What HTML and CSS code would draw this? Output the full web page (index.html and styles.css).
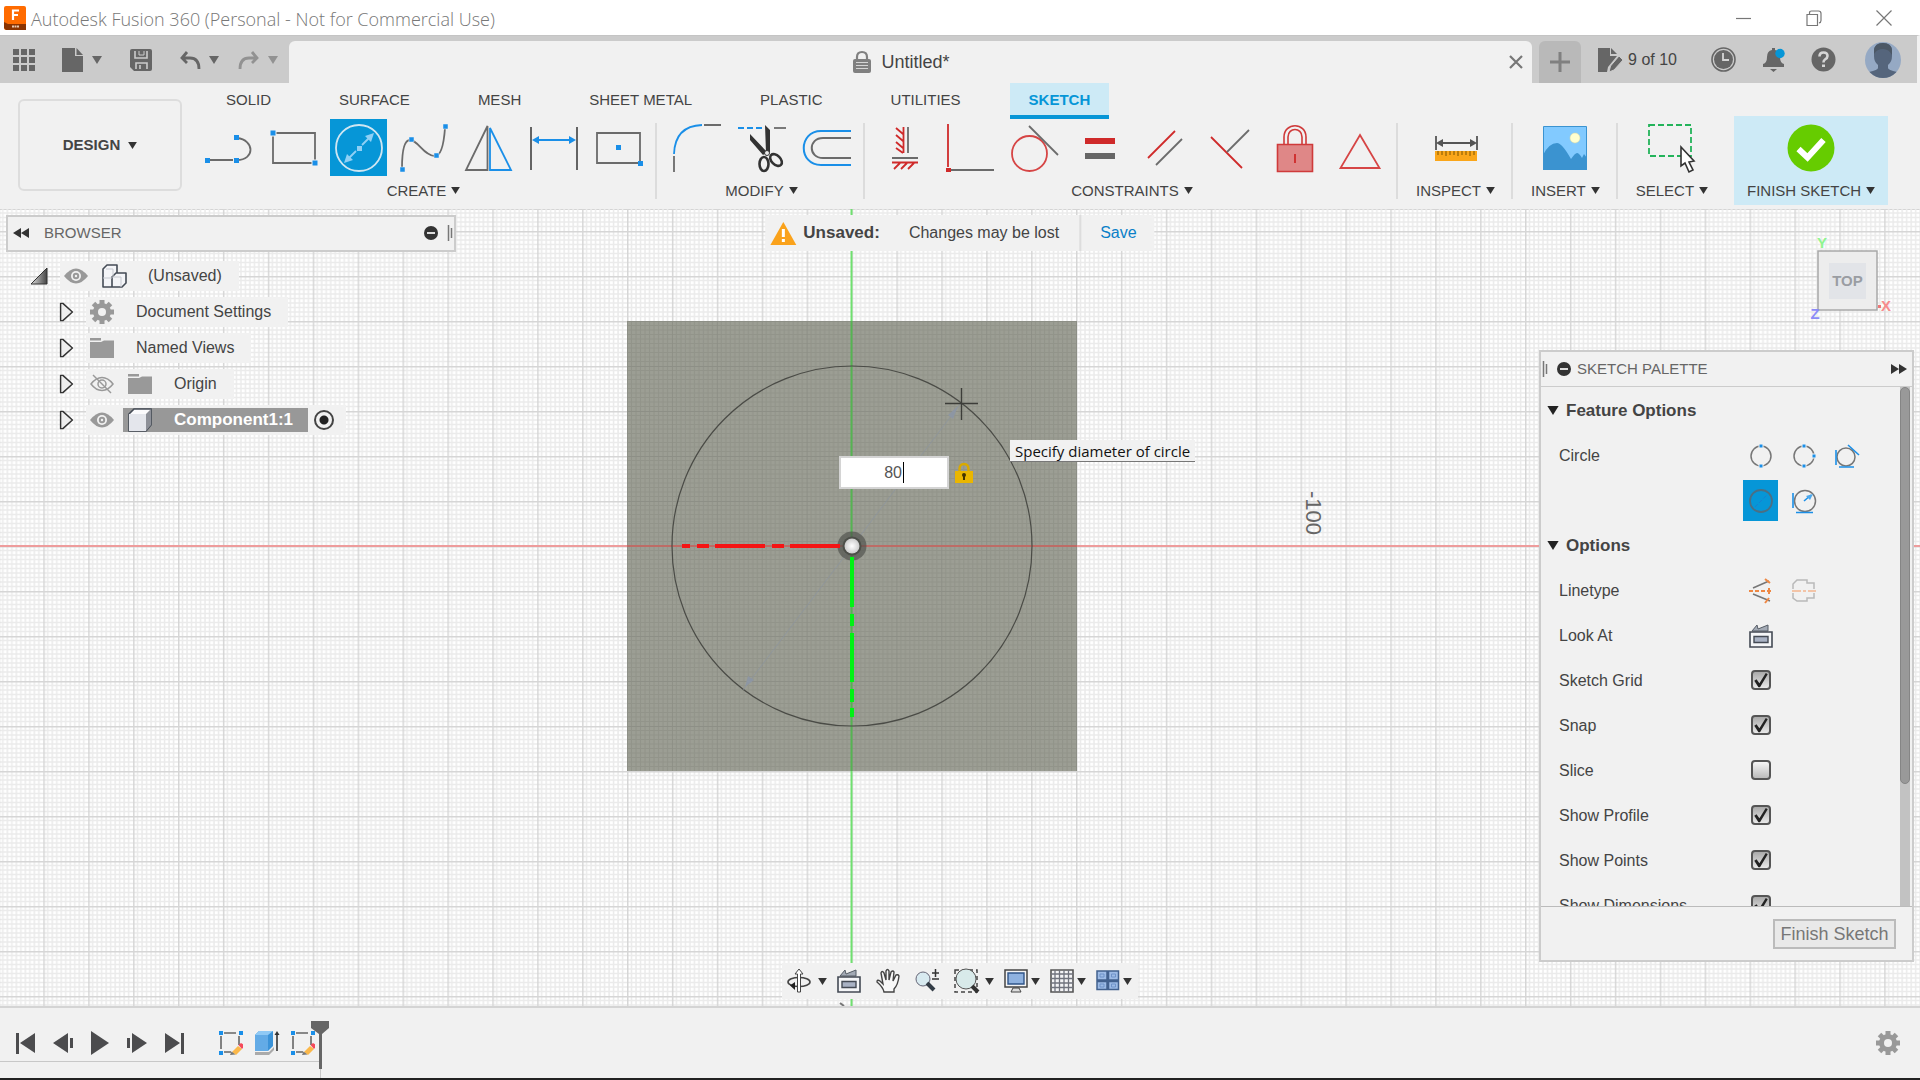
FILE: index.html
```html
<!DOCTYPE html>
<html lang="en">
<head>
<meta charset="utf-8">
<title>Autodesk Fusion 360 (Personal - Not for Commercial Use)</title>
<link rel="stylesheet" href="styles.css">
</head>
<body>
<svg class="symbols" aria-hidden="true">
  <symbol id="caret" viewBox="0 0 10 8"><path d="M0 0h10L5 8z" fill="currentColor"/></symbol>
  <symbol id="expand" viewBox="0 0 16 22"><path d="M1.500 1.500h2.500l10.500 9.500-10.500 9.500h-2.500z" fill="#eee" stroke="#333" stroke-width="1.600" stroke-linejoin="round"/></symbol>
  <symbol id="eye" viewBox="0 0 24 24"><path d="M0 12Q6 4.500 12 4.500T24 12Q18 19.500 12 19.500T0 12z" fill="#999"/><circle cx="12" cy="12" r="5" fill="#f1f1f1"/><circle cx="12" cy="12" r="3.200" fill="#999"/><circle cx="12" cy="12" r="1.200" fill="#f1f1f1"/></symbol>
  <symbol id="folder" viewBox="0 0 24 24"><path d="M0 6h11l3-1.500h10V22H0zM0 2h11v2.500H0z" fill="#999"/></symbol>
  <symbol id="gear" viewBox="0 0 24 24"><g fill="#999"><path d="M9.500 0h5v24h-5z"/><path d="M9.500 0h5v24h-5z" transform="rotate(45 12 12)"/><path d="M9.500 0h5v24h-5z" transform="rotate(90 12 12)"/><path d="M9.500 0h5v24h-5z" transform="rotate(135 12 12)"/><circle cx="12" cy="12" r="9"/></g><circle cx="12" cy="12" r="4" fill="#f1f1f1"/></symbol>
  <symbol id="collapse" viewBox="0 0 14 14"><circle cx="7" cy="7" r="7" fill="#333"/><path d="M3 7h8" stroke="#ddd" stroke-width="2"/></symbol>
  <symbol id="grip" viewBox="0 0 6 16"><path d="M1.500 0v16M4.500 3v10" stroke="#777" stroke-width="1.500"/></symbol>
  <symbol id="lookat" viewBox="0 0 24 24"><path d="M3 7l5-6 1 4 10-4v6z" fill="#a3aab5" stroke="#555c66"/><path d="M1 8h22v15H1z" fill="#f5f6f8" stroke="#444a54" stroke-width="1.600"/><path d="M5 12.500h14v6H5z" fill="#a9b2c4" stroke="#444a54" stroke-width="1.400"/></symbol>
  <symbol id="sketch" viewBox="0 0 24 24"><path d="M5 2h12M2 5v13M5 21h7M20 5v9" stroke="#666" stroke-width="1.600" fill="none"/><path d="M0 0h4v4H0zM20 0h4v4h-4zM0 20h4v4H0z" fill="#1a8fe8"/><path d="M13 21l6-6 4 3-6 6z" fill="#fbb84a"/><path d="M19.500 14l2.500-2 4 2.500-3 3.500z" fill="#f5495a"/><path d="M11 24l1.500-3.500 4 3z" fill="#777"/></symbol>
</svg>

<header class="titlebar">
  <svg class="logo" viewBox="0 0 22 24"><rect width="22" height="24" rx="2" fill="#ff6b00"/><path d="M0 16l4 2h18v6H2l-2-2z" fill="#8a3300"/><path d="M9 14V4.500h6M9 9h5" stroke="#fff" stroke-width="2.200" fill="none"/><path d="M8 20.500h7" stroke="#e8c8b0" stroke-width="2" stroke-dasharray="2 .5"/></svg>
  <h1>Autodesk Fusion 360 (Personal - Not for Commercial Use)</h1>
  <div class="window-controls">
    <button aria-label="Minimize"><svg viewBox="0 0 16 16"><path d="M0 8.500h15"/></svg></button>
    <button aria-label="Restore"><svg viewBox="0 0 16 16"><path d="M1 4.500h10.500V15.500H1zM3.500 4V3q0-2 2-2h7q2.500 0 2.500 2.500v7q0 2-2 2.500"/></svg></button>
    <button aria-label="Close"><svg viewBox="0 0 16 16"><path d="M.5.500l15 15M15.500.500l-15 15"/></svg></button>
  </div>
</header>

<div class="appbar">
  <div class="quick">
    <button aria-label="Data panel"><svg width="22" height="22" viewBox="0 0 22 22"><path d="M0 0h6v6H0zM8 0h6v6H8zM16 0h6v6h-6zM0 8h6v6H0zM8 8h6v6H8zM16 8h6v6h-6zM0 16h6v6H0zM8 16h6v6H8zM16 16h6v6h-6z" fill="#666"/></svg></button>
    <button class="q-file" aria-label="File"><svg width="21" height="24" viewBox="0 0 21 24"><path d="M0 0h13v8h8v16H0z" fill="#666"/><path d="M14.500 0L21 7h-6.500z" fill="#666"/></svg><svg class="caret"><use href="#caret"/></svg></button>
    <button class="q-save" aria-label="Save"><svg width="22" height="22" viewBox="0 0 22 22"><path d="M0 2q0-2 2-2h18q2 0 2 2v18q0 2-2 2H4l-4-4z" fill="#666"/><path d="M5 2v7h12V2M6 20v-6h11v6M10 16v4" fill="none" stroke="#cbcbcb" stroke-width="1.600"/><path d="M9 2v4h5V2" fill="#666" stroke="#cbcbcb"/></svg></button>
    <button class="q-undo" aria-label="Undo"><svg width="20" height="20" viewBox="0 0 20 20"><path d="M7 2L2 8l5 5M3 8h7q9 0 9 11" fill="none" stroke="#666" stroke-width="2.800"/></svg><svg class="caret"><use href="#caret"/></svg></button>
    <button class="q-redo" aria-label="Redo"><svg width="20" height="20" viewBox="0 0 20 20"><path d="M13 2l5 6-5 5M17 8h-7q-9 0-9 11" fill="none" stroke="#929292" stroke-width="2.800"/></svg><svg class="caret"><use href="#caret"/></svg></button>
  </div>
  <div class="doctab">
    <svg width="18" height="22" viewBox="0 0 18 22"><path d="M4 9V6q0-5 5-5t5 5v3" fill="none" stroke="#808080" stroke-width="2.200"/><rect y="8" width="18" height="14" rx="2" fill="#808080"/><path d="M3 11.500h12M3 14.500h12M3 17.500h12" stroke="#d5d5d5"/></svg>
    <span>Untitled*</span>
    <button class="tab-close" aria-label="Close document"><svg width="14" height="14" viewBox="0 0 14 14"><path d="M1 1l12 12M13 1L1 13" stroke="#777" stroke-width="2.200"/></svg></button>
  </div>
  <button class="newtab" aria-label="New design"><svg width="20" height="20" viewBox="0 0 20 20"><path d="M10 0v20M0 10h20" stroke="#808080" stroke-width="3"/></svg></button>
  <div class="account">
    <button class="docs"><svg width="25" height="24" viewBox="0 0 25 24"><path d="M0 0h12v8h7l-9 11-1 5H0z" fill="#666"/><path d="M13 0l6 6h-6z" fill="#666"/><path d="M11 24l1.500-6L21 8l4 4-9 10z" fill="#666" stroke="#cbcbcb"/></svg>9 of 10</button>
    <button aria-label="Job status"><svg width="25" height="25" viewBox="0 0 25 25"><circle cx="12.500" cy="12.500" r="11.500" fill="none" stroke="#666" stroke-width="1.600"/><circle cx="12.500" cy="12.500" r="9.500" fill="#666"/><path d="M12 6v7h6" fill="none" stroke="#d5d5d5" stroke-width="1.800"/></svg></button>
    <button aria-label="Notifications"><svg width="25" height="25" viewBox="0 0 25 25"><path d="M2 20v-3q4-1 4-7 0-6 5-7V1h3v2q5 1 5 7 0 6 4 7v3zM9 22h7l-3.500 3z" fill="#666"/><circle cx="19" cy="6.500" r="4.700" fill="#0696d7"/></svg></button>
    <button aria-label="Help"><svg width="25" height="25" viewBox="0 0 25 25"><circle cx="12.500" cy="12.500" r="12" fill="#666"/><path d="M8.500 9.500q0-4 4-4t4 3.500q0 2-2.500 3.500-1.500 1-1.500 3" fill="none" stroke="#d5d5d5" stroke-width="2.600"/><path d="M11 17.500h3V20h-3z" fill="#d5d5d5"/></svg></button>
    <button class="avatar" aria-label="Account"><svg width="36" height="36" viewBox="0 0 36 36"><clipPath id="av"><circle cx="18" cy="18" r="18"/></clipPath><g clip-path="url(#av)"><path d="M0 0h36v36H0z" fill="#95a9c4"/><path d="M9 9q0-8 9-8t9 8v5q0 6-4 9v3q0 2 9 4v6H4v-6q9-2 9-4v-3q-4-3-4-9z" fill="#55657c"/><path d="M9 8q1-7 9-7t9 7v5q-3-6-9-6t-9 5z" fill="#4c5866"/></g></svg></button>
  </div>
</div>

<div class="ribbon">
  <button class="workspace">DESIGN <svg class="caret"><use href="#caret"/></svg></button>
  <div class="ribbon-main">
    <nav class="tabs">
      <a href="#">SOLID</a><a href="#">SURFACE</a><a href="#">MESH</a><a href="#">SHEET METAL</a><a href="#">PLASTIC</a><a href="#">UTILITIES</a><a href="#" class="current">SKETCH</a>
    </nav>
    <div class="panels">
      <section class="panel create">
        <div class="tools">
          <button aria-label="Line"><svg viewBox="0 0 48 48"><path d="M3 36h25M32 14c18 2 18 22 0 22" fill="none" stroke="#6b6b6b" stroke-width="1.800"/><path d="M0 34h5v5H0zM29 34h5v5h-5zM29 11h5v5h-5z" fill="#1a8fe8"/></svg></button>
          <button aria-label="Rectangle"><svg viewBox="0 0 48 48"><path d="M3 9h42v30H3z" fill="none" stroke="#6b6b6b" stroke-width="1.800"/><path d="M0 6h6v6H0zM42 36h6v6h-6z" fill="#1a8fe8" stroke="#f1f1f1"/></svg></button>
          <button class="on" aria-label="Circle"><svg viewBox="0 0 48 48"><circle cx="24" cy="24" r="23" fill="none" stroke="#cfe6f2" stroke-width="1.800"/><path d="M14 34l7-7M27 21l7-7" stroke="#8fd0f5" stroke-width="1.800"/><path d="M39 9l-3 9-6-6zM9 39l3-9 6 6zM22 22h5v5h-5z" fill="#8fd0f5"/></svg></button>
          <button aria-label="Spline"><svg viewBox="0 0 48 48"><path d="M2 44q0-28 8-28c8 0 14 16 25 16q8 0 10-28" fill="none" stroke="#6b6b6b" stroke-width="1.800"/><path d="M0 43h5v5H0zM9 13h5v5H9zM34 29h5v5h-5zM43 0h5v5h-5z" fill="#1a8fe8" stroke="#f1f1f1" stroke-width=".5"/></svg></button>
          <button aria-label="Mirror"><svg viewBox="0 0 48 48"><path d="M22.500 2v44H1z" fill="none" stroke="#6b6b6b" stroke-width="1.800"/><path d="M25 4v42h21z" fill="none" stroke="#1a8fe8" stroke-width="1.800"/></svg></button>
          <button aria-label="Sketch dimension"><svg viewBox="0 0 48 48"><path d="M1 3v43M47 3v43" stroke="#555" stroke-width="1.800"/><path d="M6 16h36" stroke="#1a8fe8" stroke-width="1.800"/><path d="M2 16l7-4v8zM46 16l-7-4v8z" fill="#1a8fe8"/></svg></button>
          <button aria-label="Center rectangle"><svg viewBox="0 0 48 48"><path d="M2 9h43v30H2z" fill="none" stroke="#6b6b6b" stroke-width="1.800"/><path d="M21 21h5v5h-5zM43 37h5v5h-5z" fill="#1a8fe8"/></svg></button>
        </div>
        <button class="menu">CREATE <svg class="caret"><use href="#caret"/></svg></button>
      </section>
      <section class="panel">
        <div class="tools">
          <button aria-label="Fillet"><svg viewBox="0 0 48 48"><path d="M1 30Q2 2 29 1" fill="none" stroke="#1a8fe8" stroke-width="1.800"/><path d="M31 1h17M1 32v16" stroke="#6b6b6b" stroke-width="1.800"/></svg></button>
          <button aria-label="Trim"><svg viewBox="0 0 48 48"><path d="M0 4h26" stroke="#1a8fe8" stroke-width="1.800" stroke-dasharray="6 3"/><path d="M36 4h12" stroke="#6b6b6b" stroke-width="1.800"/><path d="M27 1l5 5v22l-4 1zM12 10l17 18-4 3-13-15z" fill="#333"/><g fill="none" stroke="#333" stroke-width="2.600"><ellipse cx="26" cy="40" rx="4.500" ry="7"/><ellipse cx="38" cy="36" rx="4.500" ry="7" transform="rotate(-45 38 36)"/></g><circle cx="29" cy="29" r="2.500" fill="#eee" stroke="#333"/></svg></button>
          <button aria-label="Offset"><svg viewBox="0 0 48 48"><path d="M48 7H18C-5 7-5 41 18 41h30" fill="none" stroke="#1a8fe8" stroke-width="2"/><path d="M48 14H20c-15 0-15 20 0 20h28" fill="none" stroke="#6b6b6b" stroke-width="2"/></svg></button>
        </div>
        <button class="menu">MODIFY <svg class="caret"><use href="#caret"/></svg></button>
      </section>
      <section class="panel">
        <div class="tools">
          <button aria-label="Horizontal/Vertical"><svg viewBox="0 0 48 48"><path d="M27 3v26M11 34h26" stroke="#6b6b6b" stroke-width="1.800"/><path d="M22.500 3v26M11 38.500h26M22 10l-7-6M22 17l-7-6M22 24l-7-6M22 29l-7-5M19 39l-6 6M26 39l-6 6M33 39l-6 6" fill="none" stroke="#cf2a2a" stroke-width="1.800"/></svg></button>
          <button aria-label="Coincident"><svg viewBox="0 0 48 48"><path d="M2 0v43" stroke="#cf2a2a" stroke-width="1.800"/><path d="M5 46h43" stroke="#6b6b6b" stroke-width="1.800"/><path d="M0 44h5v4H0z" fill="#cf2a2a"/></svg></button>
          <button aria-label="Tangent"><svg viewBox="0 0 48 48"><circle cx="18.500" cy="29.500" r="17.500" fill="none" stroke="#d64545" stroke-width="1.800"/><path d="M18 2l29 29" stroke="#6b6b6b" stroke-width="1.800"/></svg></button>
          <button aria-label="Equal"><svg viewBox="0 0 48 48"><path d="M9 14h30v6H9z" fill="#cf2a2a"/><path d="M9 29h30v6H9z" fill="#666"/></svg></button>
          <button aria-label="Parallel"><svg viewBox="0 0 48 48"><path d="M7 34L34 7" stroke="#cf2a2a" stroke-width="1.800"/><path d="M15 41l26-26" stroke="#6b6b6b" stroke-width="1.800"/></svg></button>
          <button aria-label="Perpendicular"><svg viewBox="0 0 48 48"><path d="M5 13l31 31" stroke="#cf2a2a" stroke-width="1.800"/><path d="M21 28L43 6" stroke="#6b6b6b" stroke-width="1.800"/></svg></button>
          <button aria-label="Fix"><svg viewBox="0 0 48 48"><path d="M6.500 20.500h35v27h-35z" fill="#df8787" stroke="#cf3a3a" stroke-width="1.600"/><path d="M13 20v-7c0-15 22-15 22 0v7M17 20v-7c0-10 14-10 14 0v7" fill="none" stroke="#cf3a3a" stroke-width="1.600"/><path d="M24 30v9" stroke="#cf2a2a" stroke-width="1.800"/></svg></button>
          <button aria-label="Symmetry"><svg viewBox="0 0 48 48"><path d="M24 11l19.500 33h-39z" fill="none" stroke="#d64545" stroke-width="1.800"/></svg></button>
        </div>
        <button class="menu">CONSTRAINTS <svg class="caret"><use href="#caret"/></svg></button>
      </section>
      <section class="panel small">
        <div class="tools"><button aria-label="Measure"><svg viewBox="0 0 48 48"><path d="M4 12v14M45 12v14M8 19h33" stroke="#555" stroke-width="1.800"/><path d="M4 19l7-4v8zM45 19l-7-4v8z" fill="#555"/><path d="M3 27h42v10H3z" fill="#faa61a"/><path d="M6 27v4M10 27v4M14 27v5M18 27v4M22 27v4M26 27v5M30 27v4M34 27v4M38 27v5M42 27v4" stroke="#7a5400"/></svg></button></div>
        <button class="menu">INSPECT <svg class="caret"><use href="#caret"/></svg></button>
      </section>
      <section class="panel small">
        <div class="tools"><button aria-label="Insert image"><svg viewBox="0 0 48 48"><path d="M2.500 2.500h43v43h-43z" fill="#82caff" stroke="#3b93d0"/><path d="M2 31q6-12 14-12 5 0 14 16 4-6 6-6t5 5l2-4 3 4v12H2z" fill="#3b93d0"/><circle cx="34" cy="14" r="5" fill="#ffffd0" stroke="#ddd8a0" stroke-width=".5"/></svg></button></div>
        <button class="menu">INSERT <svg class="caret"><use href="#caret"/></svg></button>
      </section>
      <section class="panel small">
        <div class="tools"><button aria-label="Select"><svg viewBox="0 0 48 48"><path d="M1 1h42v31H1z" fill="none" stroke="#23b35a" stroke-width="1.800" stroke-dasharray="6 3"/><path d="M33 23v19l4-3 4 9 4-2-4-8 5-1z" fill="#fff" stroke="#333" stroke-width="1.600"/></svg></button></div>
        <button class="menu">SELECT <svg class="caret"><use href="#caret"/></svg></button>
      </section>
      <section class="panel finish">
        <div class="tools"><button aria-label="Finish sketch"><svg viewBox="0 0 48 48"><circle cx="24" cy="24" r="23.500" fill="#66cc00"/><path d="M11.500 25l9 8.500L36.500 16" fill="none" stroke="#fff" stroke-width="6"/></svg></button></div>
        <button class="menu">FINISH SKETCH <svg class="caret"><use href="#caret"/></svg></button>
      </section>
    </div>
  </div>
</div>

<main class="canvas">
  <svg class="scene" viewBox="0 209 1920 797" preserveAspectRatio="xMidYMid slice">
    <defs>
      <pattern id="grid" x="851.500" y="546" width="44.900" height="45" patternUnits="userSpaceOnUse">
        <g stroke="#ebebeb" stroke-width="1.600"><path d="M4.500 0v45M9 0v45M13.500 0v45M18 0v45M22.500 0v45M27 0v45M31.500 0v45M36 0v45M40.500 0v45M0 4.500h45M0 9h45M0 13.500h45M0 18h45M0 22.500h45M0 27h45M0 31.500h45M0 36h45M0 40.500h45"/></g>
        <path d="M0 0v45M0 0h45" stroke="#d6d6d6" stroke-width="3"/>
      </pattern>
      <pattern id="plategrid" x="851.500" y="546" width="44.900" height="45" patternUnits="userSpaceOnUse">
        <g stroke="#92948a" stroke-width="1.200"><path d="M4.500 0v45M9 0v45M13.500 0v45M18 0v45M22.500 0v45M27 0v45M31.500 0v45M36 0v45M40.500 0v45M0 4.500h45M0 9h45M0 13.500h45M0 18h45M0 22.500h45M0 27h45M0 31.500h45M0 36h45M0 40.500h45"/></g>
        <path d="M0 0v45M0 0h45" stroke="#8d8f86" stroke-width="2"/>
      </pattern>
      <radialGradient id="ball"><stop offset="0" stop-color="#fff"/><stop offset="1" stop-color="#ccc"/></radialGradient>
    </defs>
    <path d="M0 209h1920v797H0z" fill="url(#grid)"/>
    <path d="M627 321h450v450H627z" fill="#9c9e94"/>
    <path d="M627 321h450v450H627z" fill="url(#plategrid)"/>
    <path d="M0 546h627M1077 546h843" stroke="#ee9c9c" stroke-width="2"/>
    <path d="M627 546h450" stroke="#bd6c66" stroke-width="2"/>
    <path d="M851.500 209v112M851.500 771v235" stroke="#6fe06f" stroke-width="2"/>
    <path d="M851.500 321v450" stroke="#55b452" stroke-width="2"/>
    <circle cx="852" cy="546" r="180" fill="none" stroke="#4a4b46" stroke-width="1.200"/>
    <path d="M961 403L743 690" stroke="#8a93a3" stroke-width=".6"/>
    <path d="M958 406l-10 9 5 4zM745 687l3-11 6 4z" fill="#8d96a3"/>
    <path d="M945 403.500h33M961.500 388v32" stroke="#3c3d39" stroke-width="1.400"/>
    <circle cx="852" cy="546" r="14.500" fill="#4d4f49" opacity=".65"/>
    <circle cx="852" cy="546" r="9.500" fill="#4d4f49"/>
    <path d="M682 546h8M697 546h12M715 546h50M772 546h12M790 546h50" stroke="#f51414" stroke-width="4"/>
    <path d="M852 557v50M852 614v12M852 633v49M852 689v13M852 708v9" stroke="#00f214" stroke-width="4"/>
    <circle cx="852" cy="546" r="7.500" fill="url(#ball)"/>
    <text class="scale" transform="translate(1306 491) rotate(90)">-100</text>
    <path d="M840 1003l4 3" stroke="#777" stroke-width="2"/>
  </svg>

  <aside class="browser">
    <div class="browser-head">
      <svg width="16" height="10" viewBox="0 0 16 10"><path d="M8 0v10L0 5zM16 0v10L8 5z" fill="#333"/></svg>
      <h2>BROWSER</h2>
      <svg width="14" height="14"><use href="#collapse"/></svg>
      <svg width="6" height="16"><use href="#grip"/></svg>
    </div>
    <ul class="tree">
      <li class="root"><svg class="open" width="18" height="18" viewBox="0 0 18 18"><defs><linearGradient id="tri"><stop offset="0" stop-color="#ddd"/><stop offset="1" stop-color="#444"/></linearGradient></defs><path d="M1 17L17 1v16z" fill="url(#tri)" stroke="#333"/></svg>
        <span class="node"><svg><use href="#eye"/></svg><svg class="wide" viewBox="0 0 24 24"><path d="M1 5l4-4h9v8l-4 4v10H1z" fill="#f4f5f8"/><path d="M10 13l4-4h10v10l-4 4H10z" fill="#f4f5f8"/><path d="M10 23V13l4-4h10v10l-4 4H1V5l4-4h10v8" fill="none" stroke="#444b55" stroke-width="1.600" stroke-linejoin="round"/><path d="M1 14h9M4 5h7v7M10 13h9v10" fill="none" stroke="#c6c9d0"/></svg><span>(Unsaved)</span></span></li>
      <li><svg class="arrow"><use href="#expand"/></svg><span class="node"><svg><use href="#gear"/></svg><span>Document Settings</span></span></li>
      <li><svg class="arrow"><use href="#expand"/></svg><span class="node"><svg><use href="#folder"/></svg><span>Named Views</span></span></li>
      <li><svg class="arrow"><use href="#expand"/></svg><span class="node"><svg viewBox="0 0 24 24"><path d="M1 12Q6 5.500 12 5.500T23 12Q18 18.500 12 18.500T1 12z" fill="none" stroke="#999" stroke-width="1.500"/><circle cx="12" cy="12" r="4" fill="none" stroke="#999" stroke-width="1.500"/><path d="M3 3l18 18" stroke="#999" stroke-width="1.500"/></svg><svg class="second"><use href="#folder"/></svg><span>Origin</span></span></li>
      <li><svg class="arrow"><use href="#expand"/></svg><span class="node"><svg><use href="#eye"/></svg><span class="chosen"><svg viewBox="0 0 24 24"><path d="M1 6l5-5h17v16l-5 6H1z" fill="#fbfbfd" stroke="#444b55" stroke-width="1.600"/><path d="M1 6h17v17H1z" fill="#e4e6ec"/><path d="M18 6l5-5v16l-5 6z" fill="#8d9098"/></svg><span>Component1:1</span></span><input type="radio" name="active" aria-label="Activate component" checked></span></li>
    </ul>
  </aside>

  <div class="notice">
    <svg width="26" height="23" viewBox="0 0 26 23"><path d="M13 0l13 23H0z" fill="#faa21b"/><path d="M13 7v8M13 17v3" stroke="#fff" stroke-width="3"/></svg>
    <strong>Unsaved:</strong><span>Changes may be lost</span><a href="#">Save</a>
  </div>

  <div class="entry">
    <input type="text" value="80" aria-label="Circle diameter"><i class="cursor"></i>
    <svg width="18" height="20" viewBox="0 0 18 20"><path d="M4.500 9V6q0-5 4.500-5t4.500 5v3" fill="none" stroke="#d9a900" stroke-width="2.400"/><path d="M0 8h18v12H0z" fill="#eab600"/><circle cx="9" cy="12" r="2" fill="#443500"/><path d="M8 12h2v5H8z" fill="#443500"/></svg>
  </div>
  <div class="tip">Specify diameter of circle</div>

  <svg class="cube" viewBox="0 0 90 90">
    <rect x="12" y="17" width="59" height="59" fill="#ededed" stroke="#a8a8a8" stroke-width="1.500"/>
    <path d="M23 29h37v36H23z" fill="#e2e4e8"/>
    <text x="41.500" y="52" class="face">TOP</text>
    <text x="16" y="14" fill="#90f590">Y</text><text x="80" y="77" fill="#f78c8c">X</text><text x="9" y="85" fill="#8c8cf7">Z</text>
    <path d="M72 71h3v3h-3z" fill="#ee7777"/>
  </svg>

  <aside class="palette">
    <div class="palette-head">
      <svg width="6" height="16"><use href="#grip"/></svg><svg width="14" height="14"><use href="#collapse"/></svg>
      <h2>SKETCH PALETTE</h2>
      <svg width="16" height="10" viewBox="0 0 16 10"><path d="M0 0v10l8-5zM8 0v10l8-5z" fill="#333"/></svg>
    </div>
    <div class="palette-body">
      <div class="options">
        <h3><svg><use href="#caret"/></svg>Feature Options</h3>
        <div class="option"><span>Circle</span>
          <div class="choices">
            <button aria-label="2-point circle"><svg viewBox="0 0 24 24"><circle cx="12" cy="12" r="10" fill="none" stroke="#777" stroke-width="1.500"/><path d="M10 0h4v4h-4zM10 20h4v4h-4z" fill="#1a8fe8" stroke="#f1f1f1"/></svg></button>
            <button aria-label="3-point circle"><svg viewBox="0 0 24 24"><circle cx="12" cy="12" r="10" fill="none" stroke="#777" stroke-width="1.500"/><path d="M10 0h4v4h-4zM10 20h4v4h-4zM20 10h4v4h-4z" fill="#1a8fe8" stroke="#f1f1f1"/></svg></button>
            <button aria-label="2-tangent circle"><svg viewBox="0 0 24 24"><circle cx="11" cy="13" r="9" fill="none" stroke="#777" stroke-width="1.500"/><path d="M1 6v15M4 23h15M13 1l11 10" stroke="#1a8fe8" stroke-width="1.600"/></svg></button>
            <button class="on" aria-label="Center diameter circle"><svg viewBox="0 0 24 24"><circle cx="12" cy="12" r="11" fill="none" stroke="#4b6f84" stroke-width="1.800"/><path d="M6 18L18 6" stroke="#1a7fd0" stroke-dasharray="4 2"/></svg></button>
            <button aria-label="3-tangent circle"><svg viewBox="0 0 24 24"><circle cx="13" cy="12" r="10.500" fill="none" stroke="#777" stroke-width="1.500"/><path d="M1 4v15M4 23.500h17M12 12l7-6" stroke="#1a8fe8" stroke-width="1.600"/><path d="M21 5l-7 2 4 4z" fill="#4aa8ee"/></svg></button>
          </div>
        </div>
        <h3><svg><use href="#caret"/></svg>Options</h3>
        <div class="option"><span>Linetype</span>
          <div class="choices">
            <button aria-label="Construction"><svg viewBox="0 0 24 24"><path d="M4 9l16-7M4 15l17 7" stroke="#777" stroke-width="1.600"/><path d="M0 12h24" stroke="#ee8844" stroke-width="1.800" stroke-dasharray="4 2"/><path d="M16 0l5 4M20 9v6M16 24l4-5" stroke="#ee8844" stroke-width="2"/></svg></button>
            <button aria-label="Centerline"><svg viewBox="0 0 24 24"><path d="M1 10V5l4-4h10v3h7v6M1 14v5l4 3h10v-3h7v-5" fill="none" stroke="#b9b9b9" stroke-width="1.500"/><path d="M0 12h24" stroke="#f3b58f" stroke-width="1.500" stroke-dasharray="9 2 3 2"/></svg></button>
          </div>
        </div>
        <div class="option"><span>Look At</span><div class="choices"><button aria-label="Look at"><svg viewBox="0 0 24 24"><use href="#lookat"/></svg></button></div></div>
        <div class="option"><label for="o1">Sketch Grid</label><input type="checkbox" id="o1" checked></div>
        <div class="option"><label for="o2">Snap</label><input type="checkbox" id="o2" checked></div>
        <div class="option"><label for="o3">Slice</label><input type="checkbox" id="o3"></div>
        <div class="option"><label for="o4">Show Profile</label><input type="checkbox" id="o4" checked></div>
        <div class="option"><label for="o5">Show Points</label><input type="checkbox" id="o5" checked></div>
        <div class="option"><label for="o6">Show Dimensions</label><input type="checkbox" id="o6" checked></div>
      </div>
      <div class="track"><div class="thumb"></div></div>
    </div>
    <div class="palette-foot"><button>Finish Sketch</button></div>
  </aside>

  <div class="navbar">
    <button class="drop" aria-label="Orbit"><svg viewBox="0 0 24 24"><ellipse cx="12" cy="13" rx="11" ry="4.500" fill="none" stroke="#444" stroke-width="1.600"/><path d="M10.500 23V5H8l4-5 4 5h-2.500v18z" fill="#fff" stroke="#444"/><path d="M3 16.500l5-3.500v8z" fill="#222"/></svg><svg class="caret"><use href="#caret"/></svg></button>
    <button aria-label="Look at"><svg viewBox="0 0 24 24"><use href="#lookat"/></svg></button>
    <button aria-label="Pan"><svg viewBox="0 0 24 24"><path d="M8 23Q7 18 1 13q0-3 3-1l3 3L5 4q1-3 3 0l2 7V2q1.500-3 3 0v9l2-8q2-2 3 0l-1 9 3-6q2-1 3 1-1 9-5 13v3z" fill="#f8f8f8" stroke="#444" stroke-width="1.400"/></svg></button>
    <button aria-label="Zoom"><svg viewBox="0 0 24 24"><circle cx="8" cy="10" r="7" fill="#d8eaf0" stroke="#667"/><path d="M12 14l7 7" stroke="#333c46" stroke-width="4"/><path d="M17 4h7M20.500 0v8M17 10h7" stroke="#333" stroke-width="1.500"/></svg></button>
    <button class="drop" aria-label="Zoom window"><svg viewBox="0 0 24 24"><path d="M1 1h22v22H1z" fill="none" stroke="#444" stroke-width="1.500" stroke-dasharray="4 3"/><circle cx="12" cy="10" r="10" fill="#d8eaea" stroke="#555"/><path d="M18 17l6 6" stroke="#333" stroke-width="4"/></svg><svg class="caret"><use href="#caret"/></svg></button>
    <button class="drop near" aria-label="Display settings"><svg viewBox="0 0 24 24"><path d="M1 1h22v17H1z" fill="#f4f4f4" stroke="#444" stroke-width="1.500"/><path d="M4 4h16v11H4z" fill="#8fb2e0" stroke="#2f5488" stroke-width="1.400"/><path d="M7 23l2-4h6l2 4z" fill="#ddd" stroke="#444"/></svg><svg class="caret"><use href="#caret"/></svg></button>
    <button class="drop near" aria-label="Grid and snaps"><svg viewBox="0 0 24 24"><path d="M1 1h22v22H1z" fill="#f4f4f6" stroke="#555" stroke-width="1.600"/><path d="M5 1v22M9.500 1v22M14 1v22M18.500 1v22M1 5h22M1 9.500h22M1 14h22M1 18.500h22" stroke="#70737d" stroke-width="1.300"/></svg><svg class="caret"><use href="#caret"/></svg></button>
    <button class="drop near" aria-label="Viewports"><svg viewBox="0 0 24 24"><path d="M1 2h10v9H1zM12.500 2h10v9h-10zM1 12.500h10v8H1zM12.500 12.500h10v8h-10z" fill="#9dbbe6" stroke="#42618f" stroke-width="1.500"/><path d="M4 5h4v3H4zM15.500 5h4v3h-4zM4 15h4v3H4zM15.500 15h4v3h-4z" fill="none" stroke="#6f93c9"/></svg><svg class="caret"><use href="#caret"/></svg></button>
  </div>
</main>

<footer class="timeline">
  <div class="playback">
    <button aria-label="Go to start"><svg viewBox="0 0 20 24"><path d="M0 2h3v21H0zM19 2v20L4 12z"/></svg></button>
    <button aria-label="Step back"><svg viewBox="0 0 20 24"><path d="M15 2v20L0 12zM17 7h3v10h-3z"/></svg></button>
    <button aria-label="Play"><svg viewBox="0 0 20 24"><path d="M1 0l18 12L1 24z"/></svg></button>
    <button aria-label="Step forward"><svg viewBox="0 0 20 24"><path d="M5 2l15 10L5 22zM0 7h3v10H0z"/></svg></button>
    <button aria-label="Go to end"><svg viewBox="0 0 20 24"><path d="M1 2l15 10L1 22zM17 2h3v21h-3z"/></svg></button>
  </div>
  <div class="features">
    <button aria-label="Sketch1"><svg><use href="#sketch"/></svg></button>
    <button aria-label="Extrude1"><svg viewBox="0 0 24 24"><path d="M0 21h14l5-5v3l-5 5H0z" fill="#aaa"/><path d="M0 4l4-4h14v15l-5 5H0z" fill="#3b93d8"/><path d="M0 4h13v16H0z" fill="#63abe6"/><path d="M0 4l4-4h14l-5 4z" fill="#8fc9f5"/><path d="M22 20V3" stroke="#333" stroke-width="1.600"/><path d="M22 0l2.500 4h-5z" fill="#333"/></svg></button>
    <button aria-label="Sketch2"><svg><use href="#sketch"/></svg></button>
    <svg class="marker" viewBox="0 0 18 48"><path d="M0 0h18v7l-7 6v35H8V13L0 7z" fill="#666"/></svg>
  </div>
  <button class="prefs" aria-label="Timeline settings"><svg width="24" height="24"><use href="#gear"/></svg></button>
</footer>
</body>
</html>
```

FILE: styles.css
```css
* { box-sizing: border-box; }
body {
  margin: 0;
  height: 100vh;
  display: flex;
  flex-direction: column;
  overflow: hidden;
  background: #f1f1f1;
  color: #444;
  font: 16px/20px "Liberation Sans", Arial, sans-serif;
}
button { border: 0; padding: 0; background: none; font: inherit; color: inherit; display: flex; align-items: center; justify-content: center; }
h1, h2, h3, ul { margin: 0; padding: 0; font: inherit; list-style: none; }
a { color: inherit; text-decoration: none; }
svg { flex: none; overflow: visible; display: block; }
.symbols { position: absolute; width: 0; height: 0; }
.caret { width: 9px; height: 7px; color: #333; }

/* window title */
.titlebar { height: 35px; flex: none; display: flex; align-items: center; padding: 0 28px 0 4px; background: #fff; }
.logo { width: 22px; height: 24px; }
.titlebar h1 { flex: 1; margin-left: 5px; padding-top: 2px; font: 300 18px/24px "Open Sans", sans-serif; color: #777; white-space: nowrap; }
.window-controls { display: flex; gap: 54px; }
.window-controls svg { width: 16px; height: 16px; fill: none; stroke: #777; stroke-width: 1.2; }

/* application bar */
.appbar { height: 48px; flex: none; display: flex; align-items: center; background: #cbcbcb; border-top: 1px solid #c4c4c4; border-right: 3px solid #f1f1f1; }
.quick { width: 289px; flex: none; display: flex; align-items: center; padding-left: 13px; }
.quick button { gap: 9px; }
.q-file { margin-left: 27px; }
.q-save { margin-left: 28px; }
.q-undo { margin-left: 28px; }
.q-redo { margin-left: 20px; }
.quick .caret { width: 10px; height: 8px; color: #666; }
.quick .q-redo .caret { color: #929292; }
.doctab { flex: 1; position: relative; align-self: flex-end; height: 42px; display: flex; align-items: center; justify-content: center; gap: 11px; padding-right: 19px; background: #f1f1f1; border-radius: 6px 6px 0 0; font-size: 18px; }
.tab-close { position: absolute; right: 9px; top: 14px; }
.newtab { width: 42px; height: 42px; margin-left: 7px; align-self: flex-end; background: #b9b9b9; border-radius: 6px 6px 0 0; }
.account { display: flex; align-items: center; gap: 25px; margin: 0 16px 0 17px; }
.account .docs { gap: 5px; margin-right: 9px; font-size: 16px; white-space: nowrap; }
.account .avatar { margin-left: 4px; }

/* ribbon */
.ribbon { height: 122px; flex: none; display: flex; font-size: 15px; }
.workspace { width: 164px; height: 92px; margin: 16px 18px 0; flex: none; gap: 8px; border: 2px solid #ddd; border-radius: 6px; font-weight: bold; }
.ribbon-main { flex: 1; }
.tabs { height: 36px; display: flex; gap: 30px; padding-left: 7px; }
.tabs a { padding: 0 19px; line-height: 33px; }
.tabs .current { background: #cdeaf6; border-bottom: 4px solid #0696d7; color: #0696d7; font-weight: bold; }
.panels { display: flex; height: 86px; }
.panel { position: relative; display: flex; flex-direction: column; align-items: center; padding: 0 8px 0 13px; }
.panel + .panel::before { content: ""; position: absolute; left: 0; top: 4px; width: 2px; height: 76px; background: #dcdcdc; }
.panel.create { padding-left: 0; }
.panel.small { padding: 0 16px 0 20px; }
.panels .panel.finish { width: 154px; margin: -3px 0 0 10px; padding: 3px 0 0; background: #cdeaf6; }
.panels .panel.finish::before { content: none; }
.tools { display: flex; gap: 8px; }
.tools button { width: 57px; height: 57px; }
.tools svg { width: 48px; height: 48px; }
.on { background: #0696d7; }
.menu { height: 29px; gap: 5px; white-space: nowrap; }

/* canvas */
.canvas { position: relative; flex: 1; min-height: 0; overflow: hidden; border-top: 4px solid #f1f1f1; background: #fff; box-shadow: inset 0 1px #ccc; }
.scene { position: absolute; inset: 0; width: 100%; height: 100%; }
.scale { font: 22px "Liberation Sans", Arial, sans-serif; fill: #666; }

.browser { position: absolute; left: 6px; top: 6px; width: 450px; }
.browser-head { height: 37px; display: flex; align-items: center; gap: 9px; padding: 0 1px 1px 5px; border: 2px solid #ccc; background: #f1f1f1; font-size: 15px; color: #666; }
.browser-head h2 { flex: 1; margin-left: 6px; }
.tree { padding: 9px 0 0 53px; display: flex; flex-direction: column; gap: 6px; }
.tree li { display: flex; align-items: center; gap: 12px; height: 30px; }
.tree .root { margin-left: -29px; }
.arrow { width: 15px; height: 20px; }
.node { display: flex; align-items: center; height: 30px; padding: 0 17px 0 4px; background: #f1f1f1; }
.node svg { width: 24px; height: 24px; }
.node span { margin-left: 22px; }
.node .wide { margin-left: 14px; }
.node .second { margin-left: 14px; }
.node .chosen { display: flex; align-items: center; height: 24px; margin: 0 6px 0 9px; padding: 0 15px 0 5px; background: #989898; color: #fff; font-weight: bold; font-size: 17px; }
.node input { appearance: none; width: 20px; height: 20px; margin: 0 -5px 0 0; border: 2px solid #444; border-radius: 50%; background: radial-gradient(#222 0 4px, #f1f1f1 5px); }

.notice { position: absolute; top: 6px; left: 50%; transform: translateX(-50%); height: 36px; display: flex; align-items: center; padding: 0 18px 0 5px; background: #f1f1f1; white-space: nowrap; }
.notice strong { margin: 0 29px 0 7px; font-size: 17px; }
.notice a { margin-left: 20px; padding-left: 19px; line-height: 36px; border-left: 2px solid #ddd; color: #0a80c8; }

.entry { position: absolute; left: 839px; top: 247px; display: flex; align-items: center; gap: 6px; }
.entry input { width: 110px; height: 33px; border: 2px solid #d4d4d4; background: #fff; padding: 0 45px 0 0; text-align: right; font: inherit; color: #555; }
.cursor { position: absolute; left: 64px; top: 6px; width: 1px; height: 21px; background: #000; }
.tip { position: absolute; left: 1010px; top: 231px; height: 22px; padding: 0 5px; background: #f1f1f1; border-bottom: 1px solid #777; font: 15px/23px "Open Sans", sans-serif; color: #111; white-space: nowrap; }
.cube { position: absolute; right: 24px; top: 25px; width: 90px; height: 90px; font-size: 15px; font-weight: bold; text-anchor: middle; }
.face { fill: #9a9da3; }

/* sketch palette */
.palette { position: absolute; right: 6px; top: 141px; width: 375px; background: #f1f1f1; border: 2px solid #ccc; }
.palette-head { height: 35px; display: flex; align-items: center; gap: 6px; padding: 0 5px 0 1px; border-bottom: 1px solid #ccc; font-size: 15px; color: #666; }
.palette-head svg + svg { margin-left: 3px; }
.palette-head h2 { flex: 1; }
.palette-body { height: 520px; display: flex; overflow: hidden; border-bottom: 1px solid #bbb; }
.options { flex: 1; padding-top: 1px; }
.options h3 { height: 45px; display: flex; align-items: center; gap: 7px; padding-left: 6px; font-size: 17px; font-weight: bold; }
.options h3 svg { width: 12px; height: 9px; color: #222; }
.option { display: grid; grid-template-columns: 185px 1fr; min-height: 45px; padding-left: 18px; line-height: 45px; }
.choices { display: grid; grid-template-columns: repeat(3, 35px); column-gap: 8px; grid-auto-rows: 45px; align-items: center; margin-left: -1px; }
.choices button { width: 35px; height: 41px; }
.choices svg { width: 24px; height: 24px; }
.option input { appearance: none; width: 20px; height: 20px; margin: 12px 0 0 7px; border: 2px solid #555; border-radius: 4px; background: linear-gradient(#f5f5f5, #bbb); }
.option input:checked { background: linear-gradient(#aaa, #e8e8e8); }
.option input:checked::after { content: ""; display: block; width: 16px; height: 16px; background: #222; clip-path: polygon(8% 55%, 22% 45%, 40% 70%, 80% 6%, 92% 14%, 44% 96%, 34% 96%); }
.track { width: 10px; margin-right: 2px; background: #c2c2c2; }
.thumb { height: 397px; background: #999; border: 1px solid #858585; border-radius: 5px; }
.palette-foot { height: 53px; display: flex; align-items: center; justify-content: flex-end; padding-right: 16px; }
.palette-foot button { width: 123px; height: 30px; border: 2px solid #bbb; background: #e9e9e9; color: #777; font-size: 18px; }

/* navigation toolbar */
.navbar { position: absolute; bottom: 7px; left: 50%; transform: translateX(-50%); width: 356px; height: 36px; display: flex; align-items: center; gap: 15px; padding-left: 5px; background: #f1f1f1; }
.navbar .drop { gap: 7px; margin-right: -5px; }
.navbar .near { gap: 3px; }
.navbar svg { width: 24px; height: 24px; }
.navbar .caret { width: 9px; height: 7px; }

/* timeline */
.timeline { height: 74px; flex: none; display: flex; align-items: center; padding: 0 20px 0 16px; border-top: 2px solid #d4d4d4; border-bottom: 2px solid #222; background: linear-gradient(#c8c8c8, #c8c8c8) 0 53px / 320px 1px no-repeat, linear-gradient(#c8c8c8, #c8c8c8) 320px 53px / 1px 20px no-repeat #f1f1f1; }
.playback { display: flex; gap: 17px; }
.playback svg { width: 20px; height: 24px; fill: #4c4c4e; }
.features { position: relative; display: flex; gap: 12px; margin-left: 35px; }
.features svg { width: 24px; height: 24px; }
.features .marker { position: absolute; left: 92px; top: -10px; width: 18px; height: 48px; }
.prefs { margin-left: auto; }
```
